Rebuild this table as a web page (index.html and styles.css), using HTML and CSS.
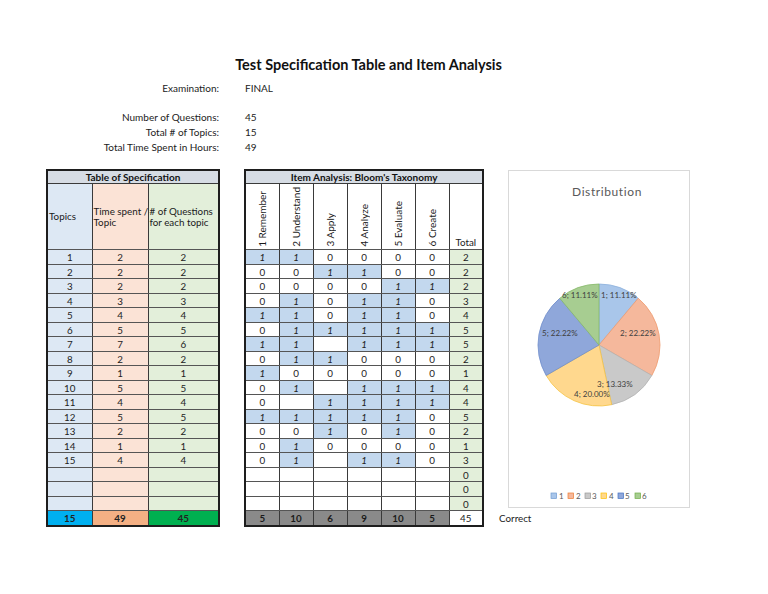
FILE: index.html
```html
<!DOCTYPE html>
<html>
<head>
<meta charset="utf-8">
<link rel="stylesheet" href="styles.css">
</head>
<body>
<div class="page">
  <h1 class="title">Test Specification Table and Item Analysis</h1>
  <div class="info">
    <div class="lbl">Examination:</div><div class="val">FINAL</div>
    <div class="lbl"></div><div class="val"></div>
    <div class="lbl">Number of Questions:</div><div class="val">45</div>
    <div class="lbl">Total # of Topics:</div><div class="val">15</div>
    <div class="lbl">Total Time Spent in Hours:</div><div class="val">49</div>
  </div>

  <div class="tables">
    <table class="spec">
      <colgroup><col class="c-top"><col class="c-time"><col class="c-q"></colgroup>
      <tr class="r-title"><th colspan="3" class="t-title">Table of Specification</th></tr>
      <tr class="r-head">
        <th class="blue hl">Topics</th>
        <th class="peach hl"><span class="nw">Time spent /</span><br>Topic</th>
        <th class="green hl"># of Questions for each topic</th>
      </tr>
      <tr><td class="blue">1</td><td class="peach">2</td><td class="green">2</td></tr>
      <tr><td class="blue">2</td><td class="peach">2</td><td class="green">2</td></tr>
      <tr><td class="blue">3</td><td class="peach">2</td><td class="green">2</td></tr>
      <tr><td class="blue">4</td><td class="peach">3</td><td class="green">3</td></tr>
      <tr><td class="blue">5</td><td class="peach">4</td><td class="green">4</td></tr>
      <tr><td class="blue">6</td><td class="peach">5</td><td class="green">5</td></tr>
      <tr><td class="blue">7</td><td class="peach">7</td><td class="green">6</td></tr>
      <tr><td class="blue">8</td><td class="peach">2</td><td class="green">2</td></tr>
      <tr><td class="blue">9</td><td class="peach">1</td><td class="green">1</td></tr>
      <tr><td class="blue">10</td><td class="peach">5</td><td class="green">5</td></tr>
      <tr><td class="blue">11</td><td class="peach">4</td><td class="green">4</td></tr>
      <tr><td class="blue">12</td><td class="peach">5</td><td class="green">5</td></tr>
      <tr><td class="blue">13</td><td class="peach">2</td><td class="green">2</td></tr>
      <tr><td class="blue">14</td><td class="peach">1</td><td class="green">1</td></tr>
      <tr><td class="blue">15</td><td class="peach">4</td><td class="green">4</td></tr>
      <tr><td class="blue"></td><td class="peach"></td><td class="green"></td></tr>
      <tr><td class="blue"></td><td class="peach"></td><td class="green"></td></tr>
      <tr><td class="blue"></td><td class="peach"></td><td class="green"></td></tr>
      <tr class="r-foot"><td class="f-blue">15</td><td class="f-orange">49</td><td class="f-green">45</td></tr>
    </table>

    <table class="item">
      <colgroup><col><col><col><col><col><col><col></colgroup>
      <tr class="r-title"><th colspan="7" class="t-title">Item Analysis: Bloom's Taxonomy</th></tr>
      <tr class="r-head">
        <th class="rot"><span>1 Remember</span></th>
        <th class="rot"><span>2 Understand</span></th>
        <th class="rot"><span>3 Apply</span></th>
        <th class="rot"><span>4 Analyze</span></th>
        <th class="rot"><span>5 Evaluate</span></th>
        <th class="rot"><span>6 Create</span></th>
        <th class="tot-h">Total</th>
      </tr>
      <tr><td class="on">1</td><td class="on">1</td><td>0</td><td>0</td><td>0</td><td>0</td><td class="tot">2</td></tr>
      <tr><td>0</td><td>0</td><td class="on">1</td><td class="on">1</td><td>0</td><td>0</td><td class="tot">2</td></tr>
      <tr><td>0</td><td>0</td><td>0</td><td>0</td><td class="on">1</td><td class="on">1</td><td class="tot">2</td></tr>
      <tr><td>0</td><td class="on">1</td><td>0</td><td class="on">1</td><td class="on">1</td><td>0</td><td class="tot">3</td></tr>
      <tr><td class="on">1</td><td class="on">1</td><td>0</td><td class="on">1</td><td class="on">1</td><td>0</td><td class="tot">4</td></tr>
      <tr><td>0</td><td class="on">1</td><td class="on">1</td><td class="on">1</td><td class="on">1</td><td class="on">1</td><td class="tot">5</td></tr>
      <tr><td class="on">1</td><td class="on">1</td><td></td><td class="on">1</td><td class="on">1</td><td class="on">1</td><td class="tot">5</td></tr>
      <tr><td>0</td><td class="on">1</td><td class="on">1</td><td>0</td><td>0</td><td>0</td><td class="tot">2</td></tr>
      <tr><td class="on">1</td><td>0</td><td>0</td><td>0</td><td>0</td><td>0</td><td class="tot">1</td></tr>
      <tr><td>0</td><td class="on">1</td><td></td><td class="on">1</td><td class="on">1</td><td class="on">1</td><td class="tot">4</td></tr>
      <tr><td>0</td><td></td><td class="on">1</td><td class="on">1</td><td class="on">1</td><td class="on">1</td><td class="tot">4</td></tr>
      <tr><td class="on">1</td><td class="on">1</td><td class="on">1</td><td class="on">1</td><td class="on">1</td><td>0</td><td class="tot">5</td></tr>
      <tr><td>0</td><td>0</td><td class="on">1</td><td>0</td><td class="on">1</td><td>0</td><td class="tot">2</td></tr>
      <tr><td>0</td><td class="on">1</td><td>0</td><td>0</td><td>0</td><td>0</td><td class="tot">1</td></tr>
      <tr><td>0</td><td class="on">1</td><td></td><td class="on">1</td><td class="on">1</td><td>0</td><td class="tot">3</td></tr>
      <tr><td></td><td></td><td></td><td></td><td></td><td></td><td class="tot">0</td></tr>
      <tr><td></td><td></td><td></td><td></td><td></td><td></td><td class="tot">0</td></tr>
      <tr><td></td><td></td><td></td><td></td><td></td><td></td><td class="tot">0</td></tr>
      <tr class="r-foot"><td class="f-gray">5</td><td class="f-gray">10</td><td class="f-gray">6</td><td class="f-gray">9</td><td class="f-gray">10</td><td class="f-gray">5</td><td class="f-white">45</td></tr>
    </table>

    <div class="side">
      <div class="chart">
        <svg width="181" height="337" viewBox="0 0 181 337">
          <text x="98" y="25" class="ch-title" text-anchor="middle">Distribution</text>
          <g transform="translate(90,174)">
            <path d="M0 0 L0 -61 A61 61 0 0 1 39.21 -46.73 Z" fill="#a9c6ea" stroke="#8bb0dc" stroke-width="0.8"/>
            <path d="M0 0 L39.21 -46.73 A61 61 0 0 1 52.83 30.5 Z" fill="#f5b89c" stroke="#ef9a6d" stroke-width="0.8"/>
            <path d="M0 0 L52.83 30.5 A61 61 0 0 1 12.68 59.67 Z" fill="#c9c9c9" stroke="#b2b2b2" stroke-width="0.8"/>
            <path d="M0 0 L12.68 59.67 A61 61 0 0 1 -52.83 30.5 Z" fill="#ffd88e" stroke="#f5c342" stroke-width="0.8"/>
            <path d="M0 0 L-52.83 30.5 A61 61 0 0 1 -39.21 -46.73 Z" fill="#8fa7da" stroke="#6f8dcc" stroke-width="0.8"/>
            <path d="M0 0 L-39.21 -46.73 A61 61 0 0 1 0 -61 Z" fill="#a7cd91" stroke="#86b96a" stroke-width="0.8"/>
            <text x="2" y="-47" class="pl">1; 11.11%</text>
            <text x="21" y="-9" class="pl">2; 22.22%</text>
            <text x="-2" y="42" class="pl">3; 13.33%</text>
            <text x="-25" y="52" class="pl">4; 20.00%</text>
            <text x="-57" y="-9" class="pl">5; 22.22%</text>
            <text x="-37" y="-47" class="pl">6; 11.11%</text>
          </g>
          <g class="legend" transform="translate(0,328)">
            <rect x="42" y="-6" width="5.5" height="5.5" fill="#a9c6ea" stroke="#6f9bd1" stroke-width="0.7"/><text x="50" y="0">1</text>
            <rect x="59" y="-6" width="5.5" height="5.5" fill="#f5b89c" stroke="#ed7d31" stroke-width="0.7"/><text x="67" y="0">2</text>
            <rect x="76" y="-6" width="5.5" height="5.5" fill="#c9c9c9" stroke="#999" stroke-width="0.7"/><text x="83" y="0">3</text>
            <rect x="92" y="-6" width="5.5" height="5.5" fill="#ffd88e" stroke="#ffc000" stroke-width="0.7"/><text x="100" y="0">4</text>
            <rect x="109" y="-6" width="5.5" height="5.5" fill="#8fa7da" stroke="#4472c4" stroke-width="0.7"/><text x="116" y="0">5</text>
            <rect x="126" y="-6" width="5.5" height="5.5" fill="#a7cd91" stroke="#70ad47" stroke-width="0.7"/><text x="133" y="0">6</text>
          </g>
        </svg>
      </div>
      <div class="correct">Correct</div>
    </div>
  </div>
</div>
</body>
</html>
```

FILE: styles.css
```css
* { box-sizing: border-box; }
html, body { margin: 0; padding: 0; background: #fff; }
body {
  width: 768px;
  height: 594px;
  overflow: hidden;
  font-family: Lato, "Liberation Sans", sans-serif;
  color: #222;
}
.page { padding-top: 56px; }
.title {
  margin: 0;
  width: 737px;
  text-align: center;
  font-size: 14.5px;
  line-height: 18px;
  font-weight: 700;
  color: #111;
}
.info {
  margin-top: 7px;
  display: grid;
  grid-template-columns: 219px 100px;
  grid-auto-rows: 14.6px;
  font-size: 10px;
  align-items: center;
}
.info .lbl { text-align: right; }
.info .val { padding-left: 26px; }

.tables {
  margin-top: 15px;
  display: flex;
  align-items: flex-start;
  padding-left: 46px;
}
table {
  border-collapse: collapse;
  table-layout: fixed;
  font-size: 9.8px;
}
table td, table th {
  padding: 0;
  text-align: center;
  vertical-align: middle;
  border: 1px solid #3a3a3a;
  line-height: 10px;
}
table tr { height: 14.5px; }
tr.r-title { height: 14px; }
tr.r-head { height: 66px; }
tr.r-foot { height: 15px; }
table > tbody > tr > * { border-top-color: #555; border-bottom-color: #555; }

.t-title {
  background: #d6dce4;
  font-weight: 700;
  font-size: 10px;
  color: #111;
  border: 2px solid #1e1e1e;
  border-bottom: 1px solid #3a3a3a;
}
.spec { width: 174px; border: 2px solid #1e1e1e; }
.c-top { width: 45px; }
.c-time { width: 56px; }
.c-q { width: 71px; }
.spec .hl {
  font-weight: 400;
  text-align: left;
  font-size: 9.8px;
  line-height: 11px;
  padding-left: 1px;
  color: #1a1a1a;
}
.nw { white-space: nowrap; }
.blue { background: #dde8f4; }
.peach { background: #fbe3d6; }
.green { background: #e3efda; }
.f-blue { background: #00b0f0; font-weight: 700; }
.f-orange { background: #f4b084; font-weight: 700; }
.f-green { background: #00b050; font-weight: 700; }
.spec tr > :first-child { border-left: 2px solid #1e1e1e; }
.spec tr > :last-child { border-right: 2px solid #1e1e1e; }
.spec tr:last-child > * { border-bottom: 2px solid #1e1e1e; }

.item { width: 240px; margin-left: 24px; border: 2px solid #1e1e1e; }
.item col { width: 34px; }
.rot { vertical-align: bottom; padding-bottom: 2px; font-weight: 400; }
.rot span {
  display: inline-block;
  writing-mode: vertical-rl;
  transform: rotate(180deg);
  white-space: nowrap;
  color: #1a1a1a;
  font-size: 10px;
  line-height: 10px;
}
.tot-h { vertical-align: bottom; font-weight: 400; padding-bottom: 2px; }
.on { background: #c3d8ee; font-style: italic; }
.tot { background: #e3efda; }
.f-gray { background: #8a8a8a; font-weight: 700; color: #1a1a1a; }
.f-white { background: #fff; }
.item tr > :first-child { border-left: 2px solid #1e1e1e; }
.item tr > :last-child { border-right: 2px solid #1e1e1e; }
.item tr:last-child > * { border-bottom: 2px solid #1e1e1e; }

.side { margin-left: 15px; display: flex; flex-direction: column; }
.chart {
  margin-left: 9px;
  margin-top: 1px;
  width: 182px;
  height: 338px;
  border: 1px solid #d9d9d9;
}
.chart svg { display: block; }
.ch-title { font-family: Lato, "Liberation Sans", sans-serif; font-size: 12px; fill: #595959; letter-spacing: 0.6px; }
.pl { font-family: Lato, "Liberation Sans", sans-serif; font-size: 8px; fill: #404040; }
.legend text { font-family: Lato, "Liberation Sans", sans-serif; font-size: 8px; fill: #595959; }
.correct { margin-top: 3px; font-size: 9.8px; line-height: 15px; color: #222; }
```
